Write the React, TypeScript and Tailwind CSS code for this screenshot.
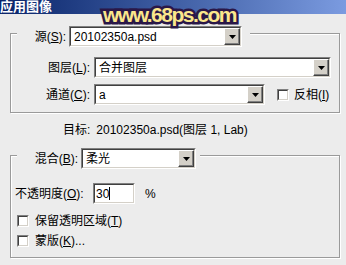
import React from "react";

function Combo({ className, text }: { className: string; text: string }) {
  return (
    <div
      className={`flex border border-t-[#808080] border-l-[#808080] border-r-white border-b-white ${className}`}
    >
      <div className="flex flex-1 min-w-0 border border-t-[#404040] border-l-[#404040] border-r-[#d4d0c8] border-b-[#d4d0c8] bg-white">
        <span className="flex-1 pl-[3px] flex items-center text-[12px] text-black whitespace-nowrap overflow-hidden">
          {text}
        </span>
        <div className="w-[16px] flex items-center justify-center bg-[#d4d0c8] border border-t-white border-l-white border-r-[#404040] border-b-[#404040] shadow-[inset_-1px_-1px_0_#808080]">
          <svg width="7" height="4" viewBox="0 0 7 4">
            <path d="M0 0H7L3.5 4Z" fill="#000" />
          </svg>
        </div>
      </div>
    </div>
  );
}

function Check() {
  return (
    <div className="w-[12px] h-[12px] border border-t-[#808080] border-l-[#808080] border-r-white border-b-white">
      <div className="w-full h-full border border-t-[#404040] border-l-[#404040] border-r-[#d4d0c8] border-b-[#d4d0c8] bg-white" />
    </div>
  );
}

export default function App() {
  return (
    <div className="relative w-[346px] h-[265px] overflow-hidden bg-[#ececec] text-[12px] text-black font-['Liberation_Sans','Noto_Sans_CJK_SC',sans-serif]">
      {/* title bar */}
      <div className="h-[14px] bg-gradient-to-r from-[#0a246a] to-[#7b9be0] text-white font-bold text-[13px] leading-[14px] whitespace-nowrap">
        应用图像
      </div>

      {/* group 1 */}
      <div className="mt-[19px] ml-[10px] w-[330px] h-[80px] border border-[#9a9a9a] shadow-[inset_1px_1px_0_#fff,1px_1px_0_#fff]">
        <div className="-mt-[8px] ml-[6px] w-[233px] h-[21px] flex items-center bg-[#ececec]">
          <span className="w-[49px] text-right whitespace-nowrap">
            源(<u>S</u>):
          </span>
          <Combo className="ml-[3px] w-[173px] h-[21px]" text="20102350a.psd" />
        </div>
        <div className="mt-[10px] flex items-center">
          <span className="w-[79px] text-right whitespace-nowrap">
            图层(<u>L</u>):
          </span>
          <Combo className="ml-[4px] w-[237px] h-[21px]" text="合并图层" />
        </div>
        <div className="mt-[6px] flex items-center">
          <span className="w-[79px] text-right whitespace-nowrap">
            通道(<u>C</u>):
          </span>
          <Combo className="ml-[4px] w-[171px] h-[21px]" text="a" />
          <div className="ml-[12px]">
            <Check />
          </div>
          <span className="ml-[5px] whitespace-nowrap">
            反相(<u>I</u>)
          </span>
        </div>
      </div>

      {/* target */}
      <div className="mt-[10px] pl-[63px] h-[14px] leading-[14px] flex whitespace-nowrap">
        <span>目标:</span>
        <span className="ml-[6px]">20102350a.psd(图层 1, Lab)</span>
      </div>

      {/* group 2 */}
      <div className="mt-[18px] ml-[10px] w-[330px] h-[103px] border border-[#9a9a9a] shadow-[inset_1px_1px_0_#fff,1px_1px_0_#fff]">
        <div className="-mt-[8px] ml-[6px] w-[183px] h-[21px] flex items-center bg-[#ececec]">
          <span className="w-[61px] text-right whitespace-nowrap">
            混合(<u>B</u>):
          </span>
          <Combo className="ml-[3px] w-[115px] h-[21px]" text="柔光" />
        </div>
        <div className="mt-[14px] ml-[4px] flex items-center">
          <span className="w-[78px] whitespace-nowrap">
            不透明度(<u>O</u>):
          </span>
          <div className="w-[42px] h-[21px] border border-t-[#808080] border-l-[#808080] border-r-white border-b-white">
            <div className="w-full h-full flex items-center border border-t-[#404040] border-l-[#404040] border-r-[#d4d0c8] border-b-[#d4d0c8] bg-white pl-[1px]">
              <span>30</span>
              <div className="w-[1px] h-[13px] bg-black" />
            </div>
          </div>
          <span className="ml-[10px]">%</span>
        </div>
        <div className="mt-[10px] ml-[6px] h-[14px] flex items-center">
          <Check />
          <span className="ml-[6px] whitespace-nowrap">
            保留透明区域(<u>T</u>)
          </span>
        </div>
        <div className="mt-[6px] ml-[6px] h-[14px] flex items-center">
          <Check />
          <span className="ml-[6px] whitespace-nowrap">
            蒙版(<u>K</u>)...
          </span>
        </div>
      </div>

      {/* watermark */}
      <div className="absolute left-[103px] top-[2px] text-[21px] leading-[26px] font-bold tracking-[-1.5px] text-[#fbe78c] whitespace-nowrap [-webkit-text-stroke:5px_#2a1748] [paint-order:stroke_fill] font-['Liberation_Sans',sans-serif]">
        www.68ps.com
      </div>
    </div>
  );
}
